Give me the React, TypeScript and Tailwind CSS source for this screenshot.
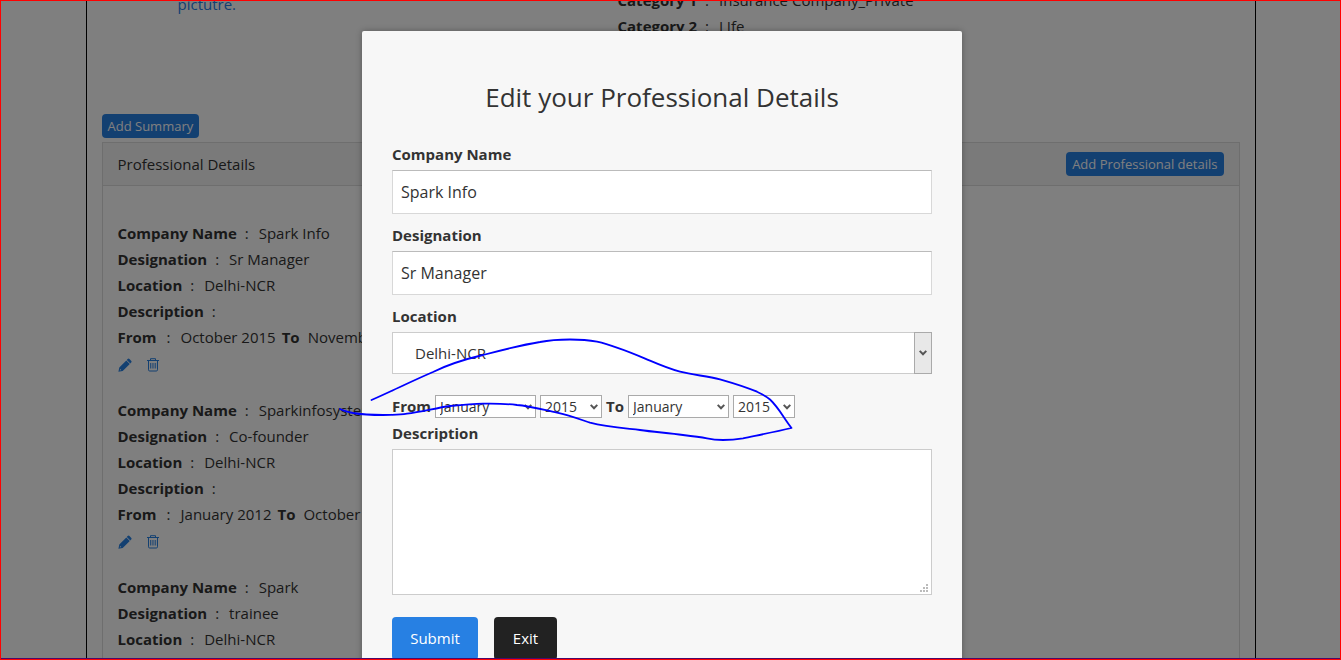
import type { ReactNode } from "react";

type Job = {
  company: string;
  designation: string;
  location: string;
  from: string;
  to: string;
};

const jobs: Job[] = [
  { company: "Spark Info", designation: "Sr Manager", location: "Delhi-NCR", from: "October 2015", to: "November 2015" },
  { company: "Sparkinfosystems", designation: "Co-founder", location: "Delhi-NCR", from: "January 2012", to: "October 2015" },
  { company: "Spark", designation: "trainee", location: "Delhi-NCR", from: "January 2010", to: "December 2011" },
];

const months = [
  "January", "February", "March", "April", "May", "June",
  "July", "August", "September", "October", "November", "December",
];
const years = ["2012", "2013", "2014", "2015", "2016"];

function PencilIcon() {
  return (
    <svg viewBox="0 0 14 14" className="size-3.5" fill="currentColor" aria-hidden="true">
      <path d="M9.600 1.100a1.300 1.300 0 0 1 1.900 0l1.600 1.600a1.300 1.300 0 0 1 0 1.900l-.8.800-3.500-3.500zM8.300 2.400l3.500 3.500-7.100 7.100L.4 13.700l.9-4.300zM2.100 11l-.3 1.400 1.400-.3z" fillRule="evenodd" />
    </svg>
  );
}

function TrashIcon() {
  return (
    <svg viewBox="0 0 14 14" className="size-3.5" fill="none" stroke="currentColor" aria-hidden="true">
      <path d="M1 2.500h12M4.500 2.500V.7h5v1.800M2.500 2.500v9.300q0 1.200 1.200 1.200h6.600q1.200 0 1.200-1.200V2.500" strokeWidth="1" />
      <path d="M4.500 5v5.500M6.200 5v5.500M7.900 5v5.500M9.600 5v5.500" strokeWidth=".8" />
    </svg>
  );
}

function Chevron() {
  return (
    <svg viewBox="0 0 8 6" className="h-1.5 w-2" fill="none" stroke="#555" strokeWidth="2" aria-hidden="true">
      <path d="M.7.9 4 4.300 7.300.9" />
    </svg>
  );
}

function Detail({ name, children }: { name: string; children?: ReactNode }) {
  return (
    <p className="whitespace-nowrap">
      <b>{name}</b>
      <span className="ml-2">:</span>
      <span className="ml-2.5">{children}</span>
    </p>
  );
}

function JobEntry({ job }: { job: Job }) {
  return (
    <li className="leading-[26px]">
      <Detail name="Company Name">{job.company}</Detail>
      <Detail name="Designation">{job.designation}</Detail>
      <Detail name="Location">{job.location}</Detail>
      <Detail name="Description" />
      <p className="whitespace-nowrap">
        <b>From</b>
        <span className="ml-2.5">:</span>
        <span className="ml-2.5">{job.from}</span>
        <b className="ml-1.5">To</b>
        <span className="ml-2">{job.to}</span>
      </p>
      <div className="flex h-[30px] items-center gap-3.5 text-[#2780e3]">
        <button type="button" aria-label="Edit"><PencilIcon /></button>
        <button type="button" aria-label="Delete"><TrashIcon /></button>
      </div>
    </li>
  );
}

function SmallSelect({ label, options, value, wide }: { label: string; options: string[]; value: string; wide?: boolean }) {
  return (
    <span className={wide ? "relative w-[101px]" : "relative w-[62px]"}>
      <select
        aria-label={label}
        defaultValue={value}
        className="block h-[23px] w-full appearance-none border border-[#aaa] bg-white pl-1 text-sm"
      >
        {options.map((o) => <option key={o}>{o}</option>)}
      </select>
      <span className="pointer-events-none absolute inset-y-0 right-1 flex items-center"><Chevron /></span>
    </span>
  );
}

function TextField({ id, label, value }: { id: string; label: string; value: string }) {
  return (
    <div className="mb-2.5">
      <label htmlFor={id} className="mb-1 block font-bold leading-[23px]">{label}</label>
      <input
        id={id}
        defaultValue={value}
        className="block h-11 w-full border border-[#d8d8d8] border-t-[#bbb] bg-white px-2 text-base"
      />
    </div>
  );
}

function ProfilePage() {
  return (
    <main className="mx-auto min-h-screen w-full max-w-[1170px] border-x border-black px-[15px]">
      <section className="flex h-[113px] leading-[26px]">
        <div className="-mt-2.5 w-[516px] pl-[76px] text-[#2780e3]">
          <a href="#picture">pictutre.</a>
        </div>
        <div className="-mt-3.5">
          <Detail name="Category 1">Insurance Company_Private</Detail>
          <Detail name="Category 2">LIfe</Detail>
        </div>
      </section>
      <button type="button" className="block h-6 rounded bg-[#2780e3] px-1.5 pt-px text-[13px] text-white">Add Summary</button>
      <section className="mt-1 border border-[#ddd]">
        <header className="flex h-[43px] items-center justify-between border-b border-[#ddd] bg-[#f5f5f5] px-[15px]">
          <h3>Professional Details</h3>
          <button type="button" className="h-6 rounded bg-[#2780e3] px-1.5 pt-px text-[13px] text-white">Add Professional details</button>
        </header>
        <ul className="flex flex-col gap-[17px] px-[15px] pt-[34px]">
          {jobs.map((job) => <JobEntry key={job.company} job={job} />)}
        </ul>
      </section>
    </main>
  );
}

function EditDialog() {
  return (
    <form
      role="dialog"
      aria-labelledby="dialog-title"
      className="w-full max-w-[600px] rounded-xs bg-[#f7f7f7] p-[30px] shadow-[0_0_6px_rgba(0,0,0,0.3)]"
    >
      <h2 id="dialog-title" className="mt-3.5 mb-6 text-center text-[26px] leading-[44px]">
        Edit your Professional Details
      </h2>
      <TextField id="company" label="Company Name" value="Spark Info" />
      <TextField id="designation" label="Designation" value="Sr Manager" />
      <label htmlFor="location" className="mb-1 block font-bold leading-[23px]">Location</label>
      <div className="relative">
        <select id="location" className="block h-[42px] w-full appearance-none border border-[#ccc] bg-white px-[22px]">
          <option>Delhi-NCR</option>
        </select>
        <span className="pointer-events-none absolute inset-y-0 right-0 flex w-[18px] items-center justify-center border border-[#aaa] bg-[#e8e8e8]">
          <Chevron />
        </span>
      </div>
      <div className="mt-[21px] flex items-center gap-1 leading-[23px]">
        <b>From</b>
        <SmallSelect label="From month" options={months} value="January" wide />
        <SmallSelect label="From year" options={years} value="2015" />
        <b>To</b>
        <SmallSelect label="To month" options={months} value="January" wide />
        <SmallSelect label="To year" options={years} value="2015" />
      </div>
      <label htmlFor="description" className="my-1 block font-bold leading-[23px]">Description</label>
      <div className="relative">
        <textarea id="description" className="block h-[146px] w-full resize-none border border-[#ccc] bg-white p-2" />
        <svg viewBox="0 0 8 8" className="pointer-events-none absolute right-1 bottom-[3px] size-2" fill="#bbb" aria-hidden="true">
          <path d="M6 0h2v2H6zM3 3h2v2H3zM6 3h2v2H6zM0 6h2v2H0zM3 6h2v2H3zM6 6h2v2H6z" />
        </svg>
      </div>
      <div className="mt-[22px] flex gap-4 text-white">
        <button type="submit" className="h-[43px] w-[86px] rounded bg-[#2780e3]">Submit</button>
        <button type="button" className="h-[43px] w-[63px] rounded bg-[#222]">Exit</button>
      </div>
    </form>
  );
}

function PenStroke() {
  return (
    <svg width="460" height="110" viewBox="338 335 460 110" className="pointer-events-none absolute top-[335px] left-[338px]" fill="none" stroke="#00f" strokeWidth="1.8" strokeLinecap="round" strokeLinejoin="round" aria-hidden="true">
      <path d="M371.500 400C392 391 412 381 433 372C449 364 466 359 483 355C502 350 521 345 540 342C550 340 560 339.500 570 339.500C579 339.500 588 340 597 341.700C616 346 634 354 650 360.700C660 365 670 369 680 371.700C693 375 707 376 720 379.300C733 383 746 387 757 391.700C762 394 766 396 770 399.500C779 408 783 417 791.500 428C775 432 759 435 743 438.300C736 439.500 730 440 723 440C717 440 712 439.500 707 438.300C699 437 691 436 683 435C669 433 654 432 640 430C622 428 606 427 590 422.700C579 419 568 415 557 412.700C544 410 530 406 517 405C506 403.700 494 403.500 483 403.700C472 404 461 405 450 406C436 408 421 412 407 413.700C399 415 391 415 383 415C372 415 362 414.500 353 413C348 412 344 411 340 409" />
    </svg>
  );
}

export default function App() {
  return (
    <div className="relative h-screen overflow-hidden bg-white font-['Open_Sans','Noto_Sans',sans-serif] text-[15px] text-[#333]">
      <div className="pt-px"><ProfilePage /></div>
      <div className="absolute inset-0 flex items-start justify-center overflow-hidden bg-black/50 pt-[31px] pr-[17px]">
        <EditDialog />
      </div>
      <PenStroke />
      <div className="pointer-events-none absolute inset-0 border border-[#f00]" />
      <div className="pointer-events-none absolute inset-x-px bottom-px h-px bg-[#4b0a6b]" />
    </div>
  );
}
